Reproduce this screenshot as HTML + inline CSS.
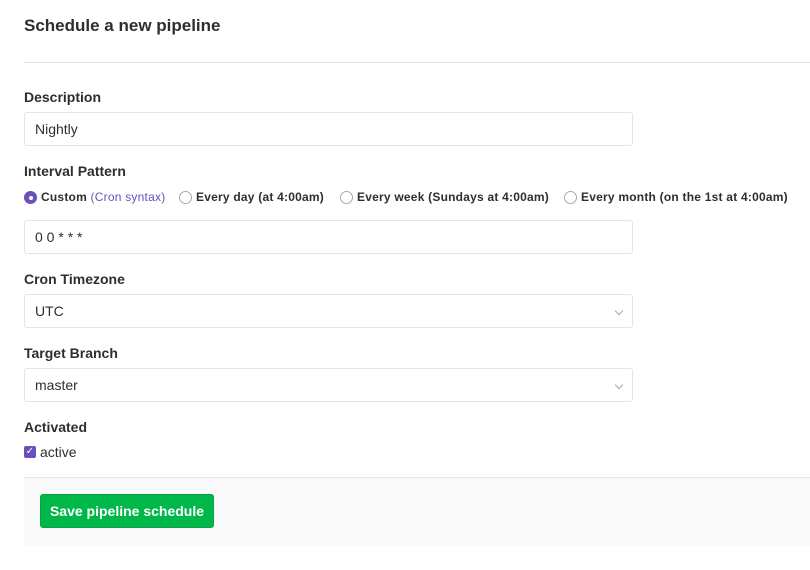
<!DOCTYPE html>
<html><head><style>
body{margin:0;width:810px;height:570px;background:#fff;font-family:"Liberation Sans",sans-serif;color:#2e2e2e;position:relative;overflow:hidden}
.a{position:absolute}
h1{position:absolute;left:24px;top:16px;margin:0;font-size:17px;font-weight:bold;color:#2e2e2e}
.hr{left:24px;top:62px;width:786px;height:1px;background:#e5e5e5}
.lbl{font-size:14px;font-weight:bold;left:24px}
.inp{left:24px;border:1px solid #e5e5e5;border-radius:3px;font-size:14px;line-height:32px;padding-left:10px;box-sizing:border-box;width:609px;height:34px}
.chev{position:absolute;right:10px;top:13px;width:5px;height:5px;border-right:1.5px solid #aaa;border-bottom:1.5px solid #aaa;transform:rotate(45deg)}
.r{font-size:12px;font-weight:bold;top:189px;line-height:16px;letter-spacing:0.22px}
.rc{display:inline-block;width:13px;height:13px;border:1px solid #aaa;border-radius:50%;vertical-align:-3px;margin-right:4px;box-sizing:border-box}
</style></head><body>
<h1>Schedule a new pipeline</h1>
<div class="a hr"></div>
<div class="a lbl" style="top:89px">Description</div>
<div class="a inp" style="top:112px">Nightly</div>
<div class="a lbl" style="top:163px">Interval Pattern</div>
<div class="a r" style="left:24px"><span class="rc" style="background:#6b4fbb;border:none;position:relative"><span style="position:absolute;left:4.5px;top:4.5px;width:4px;height:4px;background:#fff;border-radius:50%"></span></span>Custom <span style="color:#6b4fbb;font-weight:normal">(Cron syntax)</span></div>
<div class="a r" style="left:179px"><span class="rc"></span>Every day (at 4:00am)</div>
<div class="a r" style="left:340px"><span class="rc"></span>Every week (Sundays at 4:00am)</div>
<div class="a r" style="left:564px"><span class="rc"></span>Every month (on the 1st at 4:00am)</div>
<div class="a inp" style="top:220px">0 0 * * *</div>
<div class="a lbl" style="top:271px">Cron Timezone</div>
<div class="a inp" style="top:294px">UTC<span class="chev"></span></div>
<div class="a lbl" style="top:345px">Target Branch</div>
<div class="a inp" style="top:368px">master<span class="chev"></span></div>
<div class="a lbl" style="top:419px">Activated</div>
<div class="a" style="left:24px;top:446px;width:12px;height:12px;background:#6b4fbb;border-radius:2px;color:#fff;font-size:10px;line-height:12px;text-align:center">✓</div>
<div class="a" style="left:40px;top:444px;font-size:14px">active</div>
<div class="a" style="left:24px;top:477px;width:786px;height:67px;background:#fafafa;border-top:1px solid #e5e5e5"></div>
<div class="a" style="left:40px;top:494px;width:174px;height:34px;background:#00b84a;border:1px solid #0f9d45;border-radius:3px;box-sizing:border-box;color:#fff;font-size:14px;font-weight:bold;line-height:32px;text-align:center">Save pipeline schedule</div>
</body></html>
